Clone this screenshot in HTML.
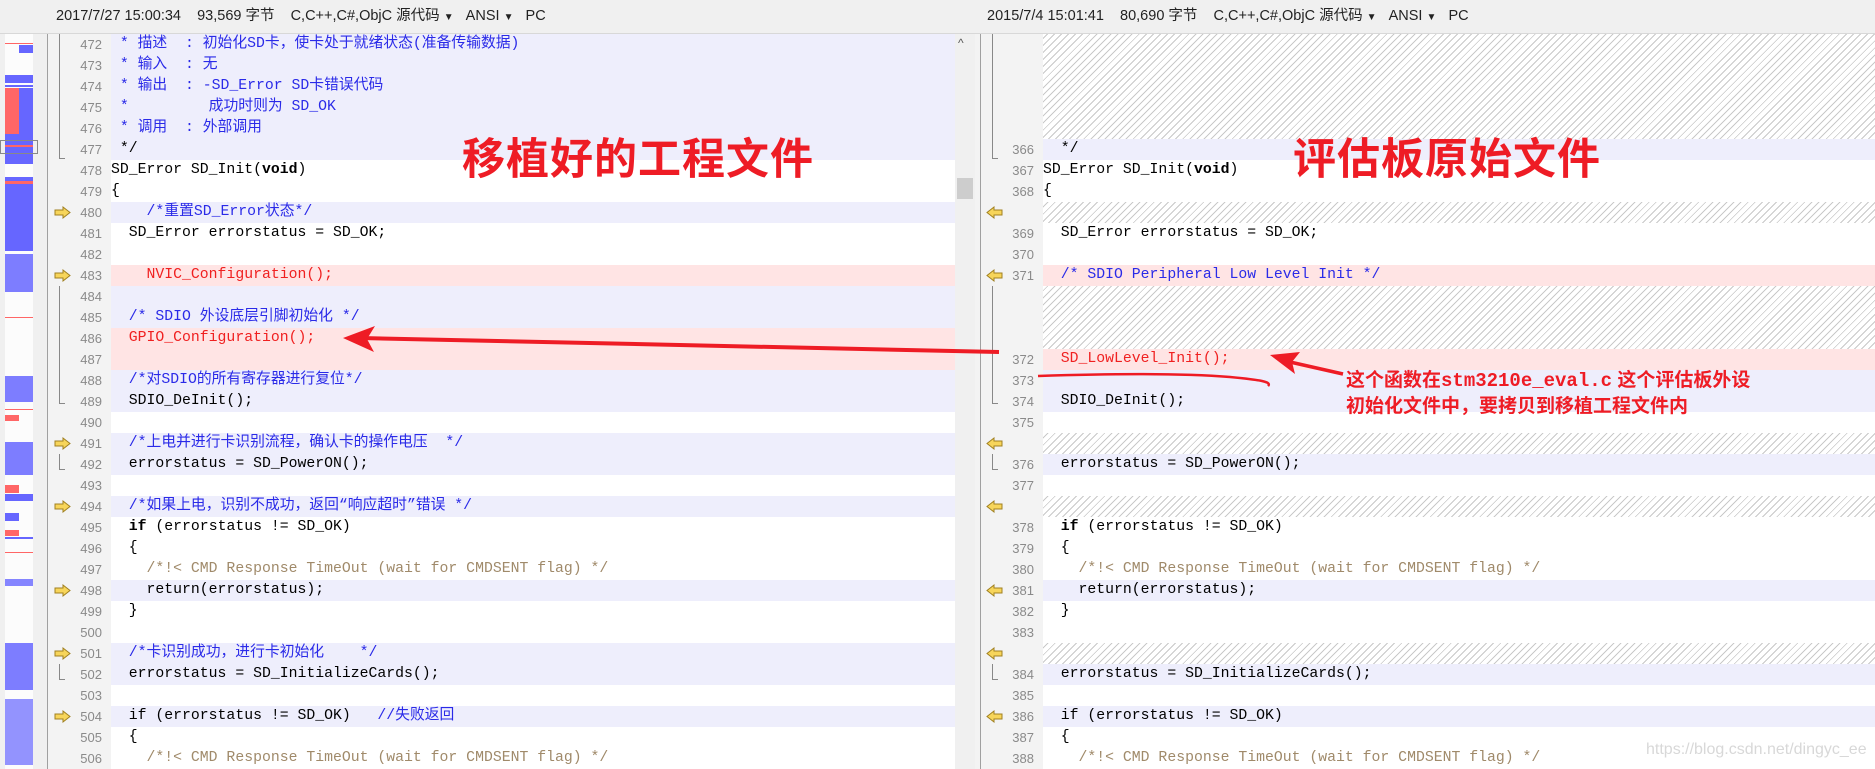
<!DOCTYPE html>
<html><head><meta charset="utf-8"><style>
*{margin:0;padding:0;box-sizing:border-box}
body{width:1875px;height:769px;overflow:hidden;background:#f0f0f0;position:relative;font-family:"Liberation Sans","Noto Sans CJK SC",sans-serif}
.hdr{position:absolute;top:0;height:33px;line-height:33px;font-size:14.5px;color:#222;white-space:pre}
.r{position:absolute;height:21px;line-height:21px;white-space:pre;font-family:"Liberation Mono","Noto Sans CJK SC",monospace;font-size:14.8px;color:#000;overflow:hidden}
.n{position:absolute;height:21px;line-height:21px;font-size:13px;color:#8a8a8a;text-align:right;width:40px;font-family:"Liberation Sans",sans-serif}
.b{background:#eeeefc}.p{background:#ffe4e4}.w{background:#fff}
.h{background:repeating-linear-gradient(-45deg,#fff 0 4px,#c9c9c9 4px 5px)}
.c{color:#2a2ae8}.red{color:#f02020}.g{color:#a08a6a}
.L{left:111px;width:844px}.R{left:1043px;width:832px}
.nl{left:62px}.nr{left:994px}
.ar{position:absolute;width:17px;height:13px}
.mm{position:absolute;height:3px}
.bl{background:#6666ff}.rd{background:#ff6666}
</style></head><body>
<!-- headers -->
<div class="hdr" style="left:0;width:955px;background:#f0f0f0"></div>
<div class="hdr" style="left:56px">2017/7/27 15:00:34    93,569 字节    C,C++,C#,ObjC 源代码 <span style="font-size:10px">▼</span>   ANSI <span style="font-size:10px">▼</span>   PC</div>
<div class="hdr" style="left:987px">2015/7/4 15:01:41    80,690 字节    C,C++,C#,ObjC 源代码 <span style="font-size:10px">▼</span>   ANSI <span style="font-size:10px">▼</span>   PC</div>
<div style="position:absolute;left:0;top:33px;width:1875px;height:1px;background:#d8d8d8"></div>

<!-- left gutter -->
<div style="position:absolute;left:5px;top:34px;width:28px;height:735px;background:#fcfcfc"></div>
<div style="position:absolute;left:47px;top:34px;width:64px;height:735px;background:#f3f3f3;border-left:1px solid #a0a0a0"></div>
<!-- minimap -->
<div class="mm rd" style="left:5px;width:28px;top:43px;height:1px"></div>
<div class="mm bl" style="left:19px;width:14px;top:45px;height:8px"></div>
<div class="mm bl" style="left:5px;width:28px;top:75px;height:8px"></div>
<div class="mm bl" style="left:5px;width:28px;top:85px;height:2px"></div>
<div class="mm rd" style="left:5px;width:14px;top:88px;height:46px"></div>
<div class="mm bl" style="left:19px;width:14px;top:88px;height:46px"></div>
<div class="mm bl" style="left:5px;width:28px;top:134px;height:30px"></div>
<div class="mm rd" style="left:5px;width:28px;top:145px;height:2px"></div>
<div style="position:absolute;left:0;top:140px;width:38px;height:14px;border:1px solid #888"></div>
<div class="mm bl" style="left:5px;width:28px;top:177px;height:74px"></div>
<div class="mm rd" style="left:5px;width:28px;top:181px;height:3px"></div>
<div class="mm bl" style="left:5px;width:28px;top:254px;height:38px;opacity:.85"></div>
<div class="mm rd" style="left:5px;width:28px;top:317px;height:1px"></div>
<div class="mm bl" style="left:5px;width:28px;top:376px;height:26px;opacity:.85"></div>
<div class="mm rd" style="left:5px;width:28px;top:409px;height:1px"></div>
<div class="mm rd" style="left:5px;width:14px;top:415px;height:6px"></div>
<div class="mm bl" style="left:5px;width:28px;top:442px;height:33px;opacity:.85"></div>
<div class="mm rd" style="left:5px;width:14px;top:485px;height:8px"></div>
<div class="mm bl" style="left:5px;width:28px;top:494px;height:7px"></div>
<div class="mm bl" style="left:5px;width:14px;top:513px;height:8px"></div>
<div class="mm rd" style="left:5px;width:14px;top:530px;height:6px"></div>
<div class="mm bl" style="left:5px;width:28px;top:537px;height:2px"></div>
<div class="mm rd" style="left:5px;width:28px;top:552px;height:1px"></div>
<div class="mm bl" style="left:5px;width:28px;top:579px;height:7px;opacity:.8"></div>
<div class="mm bl" style="left:5px;width:28px;top:643px;height:47px;opacity:.85"></div>
<div class="mm bl" style="left:5px;width:28px;top:699px;height:66px;opacity:.7"></div>

<!-- left brackets -->
<div style="position:absolute;left:59px;top:34px;width:6px;height:125px;border-left:1px solid #888;border-bottom:1px solid #888"></div>
<div style="position:absolute;left:59px;top:286px;width:6px;height:118px;border-left:1px solid #888;border-bottom:1px solid #888"></div>
<div style="position:absolute;left:59px;top:454px;width:6px;height:16px;border-left:1px solid #888;border-bottom:1px solid #888"></div>
<div style="position:absolute;left:59px;top:664px;width:6px;height:16px;border-left:1px solid #888;border-bottom:1px solid #888"></div>

<!-- left rows -->
<div class="r L b" style="top:34px"><span class="c"> * 描述  : 初始化SD卡，使卡处于就绪状态(准备传输数据)</span></div>
<div class="r L b" style="top:55px"><span class="c"> * 输入  : 无</span></div>
<div class="r L b" style="top:76px"><span class="c"> * 输出  : -SD_Error SD卡错误代码</span></div>
<div class="r L b" style="top:97px"><span class="c"> *         成功时则为 SD_OK</span></div>
<div class="r L b" style="top:118px"><span class="c"> * 调用  : 外部调用</span></div>
<div class="r L b" style="top:139px"> */</div>
<div class="r L w" style="top:160px">SD_Error SD_Init(<b>void</b>)</div>
<div class="r L w" style="top:181px">{</div>
<div class="r L b" style="top:202px"><span class="c">    /*重置SD_Error状态*/</span></div>
<div class="r L w" style="top:223px">  SD_Error errorstatus = SD_OK;</div>
<div class="r L w" style="top:244px"></div>
<div class="r L p" style="top:265px"><span class="red">    NVIC_Configuration();</span></div>
<div class="r L b" style="top:286px"></div>
<div class="r L b" style="top:307px"><span class="c">  /* SDIO 外设底层引脚初始化 */</span></div>
<div class="r L p" style="top:328px"><span class="red">  GPIO_Configuration();</span></div>
<div class="r L p" style="top:349px"></div>
<div class="r L b" style="top:370px"><span class="c">  /*对SDIO的所有寄存器进行复位*/</span></div>
<div class="r L b" style="top:391px">  SDIO_DeInit();</div>
<div class="r L w" style="top:412px"></div>
<div class="r L b" style="top:433px"><span class="c">  /*上电并进行卡识别流程，确认卡的操作电压  */</span></div>
<div class="r L b" style="top:454px">  errorstatus = SD_PowerON();</div>
<div class="r L w" style="top:475px"></div>
<div class="r L b" style="top:496px"><span class="c">  /*如果上电，识别不成功，返回“响应超时”错误 */</span></div>
<div class="r L w" style="top:517px">  <b>if</b> (errorstatus != SD_OK)</div>
<div class="r L w" style="top:538px">  {</div>
<div class="r L w" style="top:559px"><span class="g">    /*!&lt; CMD Response TimeOut (wait for CMDSENT flag) */</span></div>
<div class="r L b" style="top:580px">    return(errorstatus);</div>
<div class="r L w" style="top:601px">  }</div>
<div class="r L w" style="top:622px"></div>
<div class="r L b" style="top:643px"><span class="c">  /*卡识别成功，进行卡初始化    */</span></div>
<div class="r L b" style="top:664px">  errorstatus = SD_InitializeCards();</div>
<div class="r L w" style="top:685px"></div>
<div class="r L b" style="top:706px">  if (errorstatus != SD_OK)   <span class="c">//失败返回</span></div>
<div class="r L w" style="top:727px">  {</div>
<div class="r L w" style="top:748px"><span class="g">    /*!&lt; CMD Response TimeOut (wait for CMDSENT flag) */</span></div>

<!-- left numbers -->
<div class="n nl" style="top:34px">472</div><div class="n nl" style="top:55px">473</div><div class="n nl" style="top:76px">474</div><div class="n nl" style="top:97px">475</div><div class="n nl" style="top:118px">476</div><div class="n nl" style="top:139px">477</div><div class="n nl" style="top:160px">478</div><div class="n nl" style="top:181px">479</div><div class="n nl" style="top:202px">480</div><div class="n nl" style="top:223px">481</div><div class="n nl" style="top:244px">482</div><div class="n nl" style="top:265px">483</div><div class="n nl" style="top:286px">484</div><div class="n nl" style="top:307px">485</div><div class="n nl" style="top:328px">486</div><div class="n nl" style="top:349px">487</div><div class="n nl" style="top:370px">488</div><div class="n nl" style="top:391px">489</div><div class="n nl" style="top:412px">490</div><div class="n nl" style="top:433px">491</div><div class="n nl" style="top:454px">492</div><div class="n nl" style="top:475px">493</div><div class="n nl" style="top:496px">494</div><div class="n nl" style="top:517px">495</div><div class="n nl" style="top:538px">496</div><div class="n nl" style="top:559px">497</div><div class="n nl" style="top:580px">498</div><div class="n nl" style="top:601px">499</div><div class="n nl" style="top:622px">500</div><div class="n nl" style="top:643px">501</div><div class="n nl" style="top:664px">502</div><div class="n nl" style="top:685px">503</div><div class="n nl" style="top:706px">504</div><div class="n nl" style="top:727px">505</div><div class="n nl" style="top:748px">506</div>

<!-- left arrows -->
<svg style="position:absolute;left:0;top:0" width="80" height="769">
<defs><path id="ra" d="M1 4h8V1l7 5.5-7 5.5V9H1z" fill="#f7d55a" stroke="#a08020" stroke-width="1"/></defs>
<use href="#ra" x="54" y="206"/><use href="#ra" x="54" y="269"/><use href="#ra" x="54" y="437"/><use href="#ra" x="54" y="500"/><use href="#ra" x="54" y="584"/><use href="#ra" x="54" y="647"/><use href="#ra" x="54" y="710"/>
</svg>

<!-- left scrollbar -->
<div style="position:absolute;left:955px;top:34px;width:20px;height:735px;background:#f0f0f0"></div>
<div style="position:absolute;left:958px;top:36px;font-size:12px;color:#555">^</div>
<div style="position:absolute;left:957px;top:178px;width:16px;height:21px;background:#cdcdcd"></div>
<!-- right gutter -->
<div style="position:absolute;left:975px;top:34px;width:68px;height:735px;background:#f3f3f3"></div>
<div style="position:absolute;left:980px;top:34px;width:1px;height:735px;background:#a0a0a0"></div>
<div style="position:absolute;left:992px;top:34px;width:6px;height:125px;border-left:1px solid #888;border-bottom:1px solid #888"></div>
<div style="position:absolute;left:992px;top:286px;width:6px;height:118px;border-left:1px solid #888;border-bottom:1px solid #888"></div>
<div style="position:absolute;left:992px;top:454px;width:6px;height:16px;border-left:1px solid #888;border-bottom:1px solid #888"></div>
<div style="position:absolute;left:992px;top:664px;width:6px;height:16px;border-left:1px solid #888;border-bottom:1px solid #888"></div>

<!-- right rows -->
<div class="r R h" style="top:34px;height:105px"></div>
<div class="r R b" style="top:139px">  */</div>
<div class="r R w" style="top:160px">SD_Error SD_Init(<b>void</b>)</div>
<div class="r R w" style="top:181px">{</div>
<div class="r R h" style="top:202px"></div>
<div class="r R w" style="top:223px">  SD_Error errorstatus = SD_OK;</div>
<div class="r R w" style="top:244px"></div>
<div class="r R p" style="top:265px"><span class="c">  /* SDIO Peripheral Low Level Init */</span></div>
<div class="r R h" style="top:286px;height:63px"></div>
<div class="r R p" style="top:349px"><span class="red">  SD_LowLevel_Init();</span></div>
<div class="r R b" style="top:370px"></div>
<div class="r R b" style="top:391px">  SDIO_DeInit();</div>
<div class="r R w" style="top:412px"></div>
<div class="r R h" style="top:433px"></div>
<div class="r R b" style="top:454px">  errorstatus = SD_PowerON();</div>
<div class="r R w" style="top:475px"></div>
<div class="r R h" style="top:496px"></div>
<div class="r R w" style="top:517px">  <b>if</b> (errorstatus != SD_OK)</div>
<div class="r R w" style="top:538px">  {</div>
<div class="r R w" style="top:559px"><span class="g">    /*!&lt; CMD Response TimeOut (wait for CMDSENT flag) */</span></div>
<div class="r R b" style="top:580px">    return(errorstatus);</div>
<div class="r R w" style="top:601px">  }</div>
<div class="r R w" style="top:622px"></div>
<div class="r R h" style="top:643px"></div>
<div class="r R b" style="top:664px">  errorstatus = SD_InitializeCards();</div>
<div class="r R w" style="top:685px"></div>
<div class="r R b" style="top:706px">  if (errorstatus != SD_OK)</div>
<div class="r R w" style="top:727px">  {</div>
<div class="r R w" style="top:748px"><span class="g">    /*!&lt; CMD Response TimeOut (wait for CMDSENT flag) */</span></div>

<!-- right numbers -->
<div class="n nr" style="top:139px">366</div><div class="n nr" style="top:160px">367</div><div class="n nr" style="top:181px">368</div><div class="n nr" style="top:223px">369</div><div class="n nr" style="top:244px">370</div><div class="n nr" style="top:265px">371</div><div class="n nr" style="top:349px">372</div><div class="n nr" style="top:370px">373</div><div class="n nr" style="top:391px">374</div><div class="n nr" style="top:412px">375</div><div class="n nr" style="top:454px">376</div><div class="n nr" style="top:475px">377</div><div class="n nr" style="top:517px">378</div><div class="n nr" style="top:538px">379</div><div class="n nr" style="top:559px">380</div><div class="n nr" style="top:580px">381</div><div class="n nr" style="top:601px">382</div><div class="n nr" style="top:622px">383</div><div class="n nr" style="top:664px">384</div><div class="n nr" style="top:685px">385</div><div class="n nr" style="top:706px">386</div><div class="n nr" style="top:727px">387</div><div class="n nr" style="top:748px">388</div>

<svg style="position:absolute;left:980px;top:0" width="30" height="769">
<defs><path id="la" d="M16 4H8V1L1 6.5 8 12V9h8z" fill="#f7d55a" stroke="#a08020" stroke-width="1"/></defs>
<use href="#la" x="6" y="206"/><use href="#la" x="6" y="269"/><use href="#la" x="6" y="437"/><use href="#la" x="6" y="500"/><use href="#la" x="6" y="584"/><use href="#la" x="6" y="647"/><use href="#la" x="6" y="710"/>
</svg>

<!-- annotations -->
<div style="position:absolute;left:462px;top:130px;font-size:43px;font-weight:bold;color:#ee1c25;font-family:'Noto Sans CJK SC',sans-serif;line-height:52px;letter-spacing:1px">移植好的工程文件</div>
<div style="position:absolute;left:1293px;top:130px;font-size:43px;font-weight:bold;color:#ee1c25;font-family:'Noto Sans CJK SC',sans-serif;line-height:52px;letter-spacing:1px">评估板原始文件</div>
<div style="position:absolute;left:1346px;top:368px;font-size:19px;font-weight:bold;color:#ee1c25;line-height:25px;font-family:'Liberation Sans','Noto Sans CJK SC',sans-serif;white-space:pre">这个函数在<span style="font-family:'Liberation Mono',monospace">stm3210e_eval.c</span> 这个评估板外设
初始化文件中，要拷贝到移植工程文件内</div>
<svg style="position:absolute;left:0;top:0" width="1875" height="769">
<path d="M999 352 L360 338" stroke="#ee1c25" stroke-width="4" fill="none"/>
<path d="M343 338 L375 326 L367 339 L374 352 Z" fill="#ee1c25"/>
<path d="M1343 374 L1290 362" stroke="#ee1c25" stroke-width="3.5" fill="none"/>
<path d="M1270 355 L1300 352 L1292 362 L1295 374 Z" fill="#ee1c25"/>
<path d="M1038 376 C1100 374 1180 373 1230 377 C1262 380 1272 382 1268 386" stroke="#ee1c25" stroke-width="2.5" fill="none"/>
</svg>
<div style="position:absolute;left:1646px;top:741px;font-size:16px;color:#d8d8d8;font-family:'Liberation Sans',sans-serif">https://blog.csdn.net/dingyc_ee</div>
</body></html>
